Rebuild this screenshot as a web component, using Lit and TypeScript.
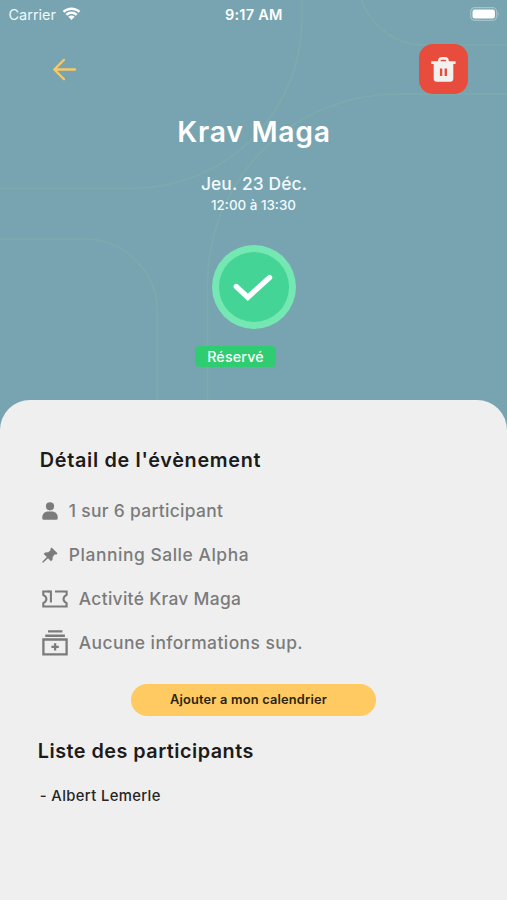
import { LitElement, html, svg, css } from "lit";
import { customElement } from "lit/decorators.js";

const wifi = html`<svg class="wifi" viewBox="0 0 18 14">
  <path d="M0.6 4.7C5.3 0.1 12.7 0.1 17.4 4.7L15.7 6.4C12 2.8 6 2.8 2.3 6.4Z" />
  <path d="M3.3 7.4C6.5 4.3 11.5 4.3 14.7 7.4L13 9.1C10.8 7 7.2 7 5 9.1Z" />
  <path d="M6 10.1C7.7 8.5 10.3 8.5 12 10.1L9 13.2Z" />
</svg>`;

const trash = html`<svg class="trash" viewBox="0 0 25 25">
  <path d="M0.2 5.6H24.6" stroke-width="2.7" fill="none" />
  <path d="M8.3 5.2V3.9Q8.3 1.4 10.8 1.4H14Q16.5 1.4 16.5 3.9V5.2" stroke-width="2.6" fill="none" />
  <path fill-rule="evenodd" stroke="none"
    d="M2.7 6H22.3V21.6Q22.3 24.8 19.1 24.8H5.9Q2.7 24.8 2.7 21.6ZM8.9 11.4V18.9H11.3V11.4ZM13.6 11.4V18.9H16V11.4Z" />
</svg>`;

const person = svg`<circle cx="8" cy="4.3" r="4.1" />
  <path d="M0.3 16.3V15C0.3 11.6 3.2 9.5 6 9.5H10C12.800 9.5 15.7 11.6 15.7 15V16.3Q15.7 17.8 14.2 17.8H1.8Q0.3 17.8 0.3 16.3Z" />`;
const pin = svg`<path d="M9.6 0.5L15.5 6.3L14.2 7.7L12.9 7.3L10.8 9.8L10.5 12.8L9 14.3L6 11.2L1.4 15.5L0.3 15.8L0.5 14.5L4.8 10L1.7 6.9L3.1 5.5L6.3 5.2L8.7 3L8.3 1.9Z" />`;
const ticket = svg`<g fill="none" stroke="currentColor" stroke-width="2.1">
    <path d="M7.2 1.5H1.3V4.8Q4.400 6.6 4.400 9Q4.400 11.4 1.3 13.2V16.5H24.6V13.2Q21.5 11.4 21.5 9Q21.5 6.6 24.6 4.8V1.5H13" />
    <path d="M5.5 1.5H8.9V12.6" />
  </g>`;
const box = svg`<path d="M6 0.3H20.4V2.6H6ZM3.3 4.4H22.9V6.9H3.3Z" />
  <path d="M1.4 9.5H24.6V24.4H1.4Z" fill="none" stroke="currentColor" stroke-width="2.3" />
  <path d="M13.1 13.2V20.6M9.4 16.9H16.8" fill="none" stroke="currentColor" stroke-width="2.3" />`;

@customElement("app-root")
export class AppRoot extends LitElement {
  static styles = css`
    :host { display: block; font-family: Inter, "Open Sans", sans-serif; }
    * { box-sizing: border-box; }
    svg { display: block; flex: none; }
    .screen { position: relative; width: 507px; height: 900px; overflow: hidden; background: #77a4b0; display: flex; flex-direction: column; }
    .lines { position: absolute; inset: 0 0 auto 0; width: 507px; height: 430px; fill: none; stroke: #80b0ac; stroke-width: 1.7; opacity: .58; }
    .status { position: relative; display: grid; grid-template-columns: 1fr auto 1fr; align-items: center; height: 28px; padding: 0 8px 0 8.5px; color: #fff; font-size: 14.5px; }
    .carrier { display: flex; align-items: center; gap: 6px; color: #eff8fb; }
    .wifi { width: 19px; height: 15px; fill: #fff; margin-top: -2px; }
    .clock { font-weight: 600; letter-spacing: .25px; }
    .battery { justify-self: end; width: 30px; height: 14px; margin: -1px -1px 0 0; }
    .bar { position: relative; display: flex; justify-content: space-between; align-items: center; height: 50px; margin-top: 16px; padding: 0 39px 0 52.3px; }
    .back { width: 25px; height: 24px; fill: none; stroke: #f8c966; stroke-width: 2.3; stroke-linecap: round; stroke-linejoin: round; }
    .delete { display: grid; place-items: center; width: 49.5px; height: 49.5px; border: 0; border-radius: 14px; background: #e74c3c; padding: 0; }
    .trash { width: 25px; height: 25px; fill: #f3f1f0; stroke: #f3f1f0; }
    .head { position: relative; display: flex; flex-direction: column; align-items: center; color: #fff; }
    h1, h2, p { margin: 0; white-space: nowrap; }
    h1 { margin: 18px 0 0 1px; line-height: 40px; font-size: 28.3px; font-weight: 570; letter-spacing: .75px; }
    .date { margin: 20px 0 0 1px; line-height: 24px; font-size: 17.4px; font-weight: 450; letter-spacing: .12px; color: #f3fafd; }
    .time { line-height: 18px; font-size: 13.4px; font-weight: 450; color: #f3fafd; letter-spacing: 0; }
    .check { width: 84px; height: 84px; margin-top: 31px; }
    .tag { margin: 16.5px 36px 0 0; width: 81px; height: 21.5px; border-radius: 4.5px; background: #2fcc71; text-align: center; line-height: 21px; font-size: 14.2px; font-weight: 450; letter-spacing: .2px; }
    .sheet { position: relative; flex: 1; margin-top: 33px; border-radius: 30px 30px 0 0; background: #efefef; color: #1b1b1b; display: flex; flex-direction: column; align-items: flex-start; padding: 47.5px 37px 0 39.8px; }
    h2 { line-height: 24px; font-size: 19.8px; font-weight: 570; letter-spacing: .7px; }
    .facts { display: flex; flex-direction: column; margin-top: 17.5px; color: #7b7b7b; }
    .fact { display: flex; align-items: center; height: 44px; font-size: 17.4px; font-weight: 450; line-height: 24px; white-space: nowrap; fill: currentColor; }
    .small { width: 16px; height: 18px; margin: 0 11px 0 2px; }
    .pin { width: 16px; height: 16px; }
    .wide { width: 26px; height: 18px; margin: 0 11px 0 2px; }
    .box { height: 26px; }
    .people { letter-spacing: .32px; }
    .room { letter-spacing: .56px; }
    .activity { letter-spacing: .32px; }
    .info { letter-spacing: .45px; }
    .calendar { align-self: center; margin: 18.5px 0 0 -2px; width: 245px; height: 32.5px; border: 0; border-radius: 17px; background: #ffca61; color: #2b2415; font: 570 12.8px/32px Inter, "Open Sans", sans-serif; letter-spacing: .2px; padding: 0 0 0 38.5px; text-align: left; white-space: nowrap; }
    .list { margin: 22.7px 0 0 -2px; font-size: 19.8px; letter-spacing: .49px; }
    .member { margin-top: 23px; line-height: 20px; font-size: 14.8px; font-weight: 470; letter-spacing: .37px; color: #252525; }
  `;

  render() {
    return html`<main class="screen">
      <svg class="lines" viewBox="0 0 507 430">
        <path d="M0 188.5H132A170 170 0 0 0 302 18.5V0" />
        <path d="M0 239H85C124 239 157.300 272 157.300 311V430" />
        <path d="M207.500 430V284A190 190 0 0 1 397 94H507" />
        <path d="M358 -22A67 67 0 0 0 425 45H507" />
      </svg>
      <header class="status">
        <div class="carrier"><span>Carrier</span>${wifi}</div>
        <span class="clock">9:17 AM</span>
        <svg class="battery" viewBox="0 0 30 14">
          <rect x="0.7" y="0.7" width="26" height="12.600" rx="4" fill="none" stroke="#a5c3cb" stroke-width="1.2" />
          <rect x="2.500" y="2.500" width="22.400" height="9" rx="2.200" fill="#fff" />
          <path d="M28 4.800Q29.800 7 28 9.200Z" fill="#a5c3cb" />
        </svg>
      </header>
      <nav class="bar">
        <svg class="back" viewBox="0 0 25 24"><path d="M23 12.500H2.500M12 2.700L2.300 12.500L12 22.300" /></svg>
        <button class="delete" aria-label="Supprimer">${trash}</button>
      </nav>
      <section class="head">
        <h1>Krav Maga</h1>
        <p class="date">Jeu. 23 Déc.</p>
        <p class="time">12:00 à 13:30</p>
        <svg class="check" viewBox="0 0 84 84">
          <circle cx="42" cy="42" r="42" fill="#74e7b3" />
          <circle cx="42" cy="42" r="35" fill="#43d496" />
          <path d="M24.200 41.500L35.800 52.300L57.600 32.500" fill="none" stroke="#fff" stroke-width="5.300" stroke-linecap="round" />
        </svg>
        <div class="tag">Réservé</div>
      </section>
      <section class="sheet">
        <h2>Détail de l'évènement</h2>
        <div class="facts">
          <div class="fact"><svg class="small" viewBox="0 0 16 18">${person}</svg><span class="people">1 sur 6 participant</span></div>
          <div class="fact"><svg class="small pin" viewBox="0 0 16 16">${pin}</svg><span class="room">Planning Salle Alpha</span></div>
          <div class="fact"><svg class="wide" viewBox="0 0 26 18">${ticket}</svg><span class="activity">Activité Krav Maga</span></div>
          <div class="fact"><svg class="wide box" viewBox="0 0 26 26">${box}</svg><span class="info">Aucune informations sup.</span></div>
        </div>
        <button class="calendar">Ajouter a mon calendrier</button>
        <h2 class="list">Liste des participants</h2>
        <p class="member">- Albert Lemerle</p>
      </section>
    </main>`;
  }
}
